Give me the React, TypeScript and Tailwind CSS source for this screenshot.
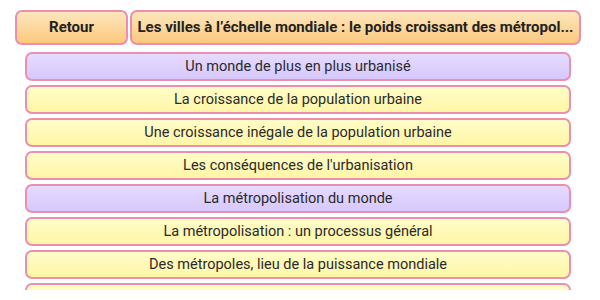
import React from 'react';

const items: { label: string; kind: 'section' | 'lesson' }[] = [
  { label: 'Un monde de plus en plus urbanisé', kind: 'section' },
  { label: 'La croissance de la population urbaine', kind: 'lesson' },
  { label: 'Une croissance inégale de la population urbaine', kind: 'lesson' },
  { label: "Les conséquences de l'urbanisation", kind: 'lesson' },
  { label: 'La métropolisation du monde', kind: 'section' },
  { label: 'La métropolisation : un processus général', kind: 'lesson' },
  { label: 'Des métropoles, lieu de la puissance mondiale', kind: 'lesson' },
  { label: 'Les métropoles et la mondialisation', kind: 'lesson' },
];

export default function App() {
  return (
    <div className="w-[600px] h-[300px] overflow-hidden bg-white font-['Roboto',sans-serif] text-[#222]">
      <div className="flex gap-[2px] pl-[15px] pr-[19px] pt-[10px]">
        <button className="w-[113px] h-[35px] shrink-0 rounded-[7px] border-2 border-[#ec8fae] bg-gradient-to-b from-[#fde6bd] to-[#fbc97c] text-[15px] font-bold">
          Retour
        </button>
        <div className="flex-1 min-w-0 h-[35px] rounded-[7px] border-2 border-[#ec8fae] bg-gradient-to-b from-[#fde6bd] to-[#fbc97c] px-[4px] flex items-center justify-center">
          <span className="whitespace-nowrap overflow-hidden text-[15px] font-bold">
            Les villes à l’échelle mondiale : le poids croissant des métropol...
          </span>
        </div>
      </div>
      {/* scroll area: clipped a little above the window bottom */}
      <div className="h-[245px] overflow-hidden flex flex-col gap-[4px] pl-[25px] pr-[29px] pt-[7px]">
        {items.map((it) => (
          <div
            key={it.label}
            className={
              it.kind === 'section'
                ? 'h-[29px] shrink-0 rounded-[7px] border-2 border-[#ec8fae] bg-gradient-to-b from-[#e6dbff] to-[#d6c8fc] flex items-center justify-center text-[14.5px] text-[#2a2a2a]'
                : 'h-[29px] shrink-0 rounded-[7px] border-2 border-[#ec8fae] bg-gradient-to-b from-[#fffcc8] to-[#fff6a6] flex items-center justify-center text-[14.5px] text-[#2a2a2a]'
            }
          >
            {it.label}
          </div>
        ))}
      </div>
    </div>
  );
}
